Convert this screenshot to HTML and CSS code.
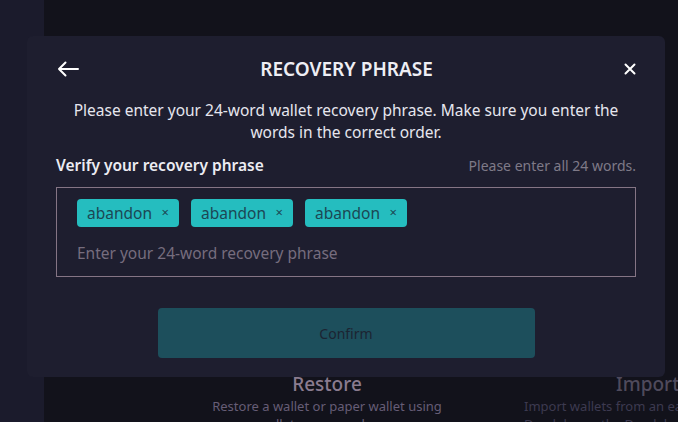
FILE: index.html
```html
<!DOCTYPE html>
<html>
<head>
<meta charset="utf-8">
<link rel="stylesheet" href="styles.css">
</head>
<body>
<div class="app">
  <aside class="sidebar"></aside>
  <main class="main">
    <div class="cards">
      <div class="card">
        <div class="card-title">Restore</div>
        <div class="card-text">Restore a wallet or paper wallet using<br>wallet recovery phrase</div>
      </div>
      <div class="card card-import">
        <div class="card-title">Import</div>
        <div class="card-text">Import wallets from an ea<br>Daedalus or the Daedalus</div>
      </div>
    </div>
  </main>
</div>

<div class="modal">
  <div class="modal-header">
    <svg class="icon-back" width="22" height="16" viewBox="0 0 22 16"><path d="M21 8H2M8.5 1.5L2 8l6.5 6.5" fill="none" stroke="#ffffff" stroke-width="2" stroke-linecap="round" stroke-linejoin="round"/></svg>
    <h1 class="modal-title">RECOVERY PHRASE</h1>
    <svg class="icon-close" width="12" height="12" viewBox="0 0 12 12"><path d="M1.5 1.5l9 9M10.5 1.5l-9 9" fill="none" stroke="#ffffff" stroke-width="2" stroke-linecap="round"/></svg>
  </div>
  <p class="modal-desc">Please enter your 24-word wallet recovery phrase. Make sure you enter the words in the correct order.</p>
  <div class="field-head">
    <span class="field-label">Verify your recovery phrase</span>
    <span class="field-hint">Please enter all 24 words.</span>
  </div>
  <div class="phrase-box">
    <div class="chips">
      <span class="chip">abandon <span class="chip-x">×</span></span>
      <span class="chip">abandon <span class="chip-x">×</span></span>
      <span class="chip">abandon <span class="chip-x">×</span></span>
    </div>
    <div class="placeholder">Enter your 24-word recovery phrase</div>
  </div>
  <div class="actions">
    <button class="confirm">Confirm</button>
  </div>
</div>
</body>
</html>
```

FILE: styles.css
```css
* { box-sizing: border-box; }
html, body {
  margin: 0;
  padding: 0;
  width: 678px;
  height: 422px;
  overflow: hidden;
  background: #12121b;
  font-family: "Noto Sans", "Open Sans", sans-serif;
}
.app {
  display: flex;
  width: 678px;
  height: 422px;
}
.sidebar {
  width: 44px;
  flex: none;
  background: #1b1b2c;
}
.main {
  flex: 1;
  background: #12121b;
  position: relative;
  overflow: hidden;
}
.cards {
  display: flex;
  padding-top: 371px;
  padding-left: 168px;
  gap: 82px;
}
.card {
  width: 230px;
  flex: none;
  text-align: center;
  color: #8a7b8f;
}
.card-import {
  text-align: left;
  width: 200px;
}
.card-title {
  font-size: 19px;
  line-height: 26px;
  font-weight: 500;
}
.card-import .card-title { padding-left: 92px; color: #4f4a5c; }
.card-import .card-text { color: #3d3a50; }
.card-text {
  font-size: 13px;
  line-height: 18px;
  color: #665d76;
}

.modal {
  position: absolute;
  left: 27px;
  top: 36px;
  width: 638px;
  height: 341px;
  background: #1e1e2f;
  border-radius: 6px;
  padding: 20px 29px 19px;
  display: flex;
  flex-direction: column;
}
.modal-header {
  height: 24px;
  display: grid;
  grid-template-columns: 60px 1fr 60px;
  align-items: center;
  padding: 0 0 0 1px;
}
.icon-close { justify-self: end; }
.modal-title {
  margin: 0;
  font-size: 19px;
  font-weight: 600;
  color: #eeeef4;
  text-align: center;
}
.modal-desc {
  margin: 19px 0 0;
  font-size: 15.5px;
  line-height: 22px;
  color: #e6e6ee;
  text-align: center;
  padding: 0 10px;
}
.field-head {
  margin-top: 12px;
  display: flex;
  justify-content: space-between;
  align-items: baseline;
  line-height: 20px;
}
.field-label {
  font-size: 15.5px;
  font-weight: 600;
  color: #ececf2;
}
.field-hint {
  font-size: 14px;
  color: #7f7a88;
}
.phrase-box {
  margin-top: 11px;
  height: 91px;
  border: 1px solid #857585;
  padding: 11px 20px 0;
}
.chips {
  display: flex;
  gap: 12px;
}
.chip {
  display: inline-flex;
  align-items: center;
  height: 28px;
  width: 102px;
  padding: 0 10px 1px;
  background: #25bdbf;
  border-radius: 4px;
  color: #1c4754;
  font-size: 15.5px;
  justify-content: space-between;
}
.chip-x {
  font-size: 13px;
  line-height: 1;
}
.placeholder {
  margin-top: 16px;
  font-size: 15.5px;
  line-height: 20px;
  color: #766d7e;
}
.actions {
  margin-top: 31px;
  display: flex;
  justify-content: center;
}
.confirm {
  width: 377px;
  height: 50px;
  border: none;
  border-radius: 4px;
  background: #1d4f5c;
  color: #1c2432;
  font-family: inherit;
  font-size: 14px;
}
```
